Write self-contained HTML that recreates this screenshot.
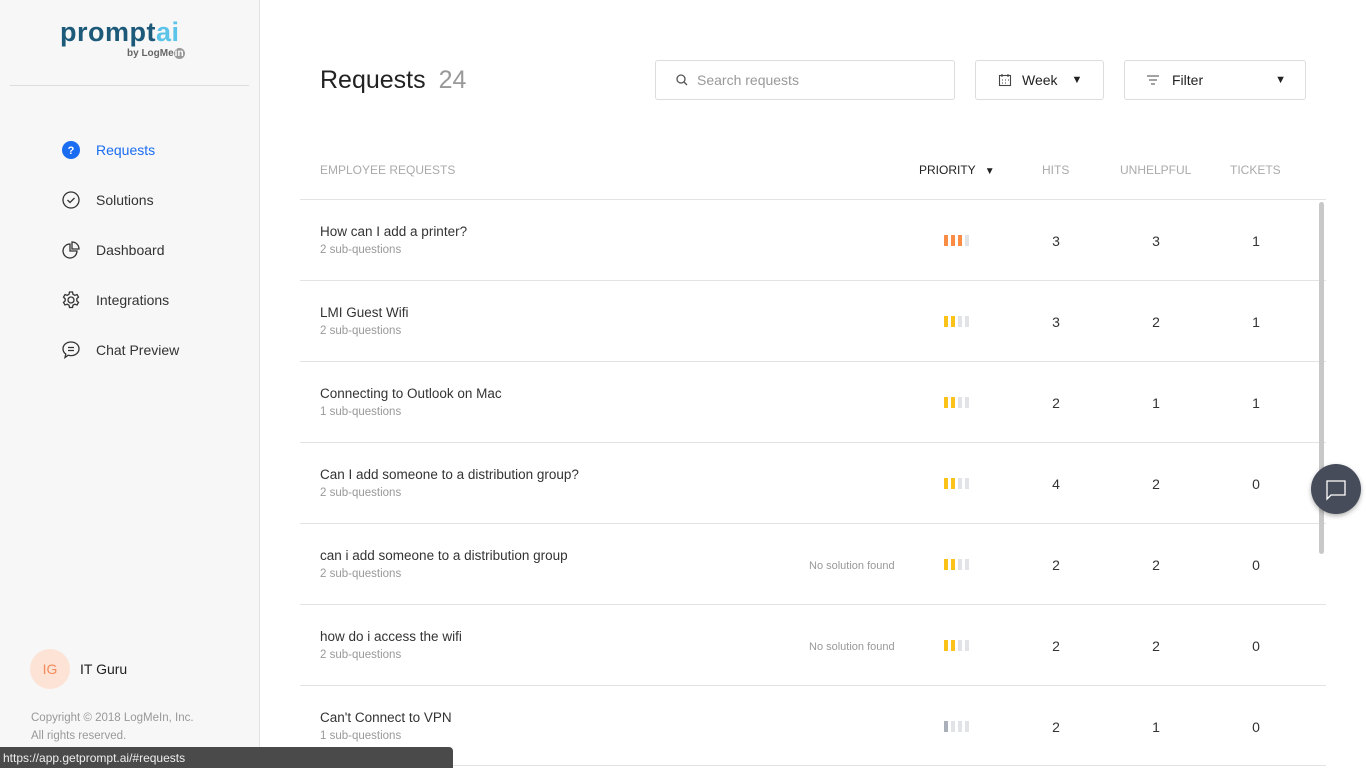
<!DOCTYPE html>
<html><head><meta charset="utf-8"><style>
*{margin:0;padding:0;box-sizing:border-box}
body{width:1366px;height:768px;overflow:hidden;font-family:"Liberation Sans",sans-serif;background:#fff;position:relative;color:#222}
.side{position:absolute;left:0;top:0;width:260px;height:768px;background:#f7f7f7;border-right:1px solid #e3e3e3}
.logo{position:absolute;left:60px;top:17px;font-size:27px;font-weight:bold;color:#1d5a7a;letter-spacing:0.5px}
.logo span{color:#5cc4e8}
.by{position:absolute;left:127px;top:48px;font-size:10px;color:#666;font-weight:bold}
.hr{position:absolute;left:10px;top:85px;width:239px;height:1px;background:#ddd}
.nav{position:absolute;left:60px;font-size:14px;color:#333;display:flex;align-items:center}
.nav svg{width:22px;height:22px;margin-right:14px}
.ab{position:absolute;left:30px;top:649px;width:40px;height:40px;border-radius:50%;background:#fde3d6;color:#f28a5a;font-size:14px;text-align:center;line-height:40px}
.box{position:absolute;border:1px solid #ddd;border-radius:3px;height:40px;top:60px;font-size:14px;display:flex;align-items:center}
.th{position:absolute;top:163px;font-size:12px;color:#aaa}
.row{position:absolute;left:300px;width:1026px;height:81px;border-top:1px solid #e3e3e3}
.t{position:absolute;left:20px;top:24px;font-size:13.5px;color:#333}
.s{position:absolute;left:20px;top:44px;font-size:11.5px;color:#999}
.n{position:absolute;top:33px;font-size:14px;color:#333;width:40px;text-align:center}
.ns{position:absolute;left:509px;top:36px;font-size:11px;color:#999}
.bars{position:absolute;left:644px;top:35px;display:flex;gap:3px}
.bars i{width:4px;height:11px;background:#e1e3e7;display:block}
</style></head><body>
<div class="side">
<div class="logo">prompt<span>ai</span></div>
<div class="by">by LogMe<span style="background:#999;color:#fff;border-radius:50%;padding:0 1px">in</span></div>
<div class="hr"></div>
<div class="nav" style="top:139px;color:#1a6cf0"><svg viewBox="0 0 22 22"><circle cx="11" cy="11" r="9" fill="#1a6cf0"/><text x="11" y="15" font-size="11" fill="#fff" text-anchor="middle" font-family="Liberation Sans" font-weight="bold">?</text></svg>Requests</div>
<div class="nav" style="top:189px"><svg viewBox="0 0 22 22" fill="none" stroke="#333" stroke-width="1.3"><circle cx="11" cy="11" r="8"/><path d="M7.5 11l2.5 2.5 4.5-4.5"/></svg>Solutions</div>
<div class="nav" style="top:239px"><svg viewBox="0 0 22 22" fill="none" stroke="#333" stroke-width="1.3"><path d="M10 5a7 7 0 1 0 7 7h-7z"/><path d="M12 3v7h7a7 7 0 0 0-7-7z"/></svg>Dashboard</div>
<div class="nav" style="top:289px"><svg viewBox="0 0 22 22" fill="none" stroke="#333" stroke-width="1.3"><circle cx="11" cy="11" r="3"/><path d="M9.5 3h3l.5 2.3 1.8 1 2.2-.8 1.5 2.6-1.7 1.6v2.1l1.7 1.6-1.5 2.6-2.2-.8-1.8 1-.5 2.3h-3l-.5-2.3-1.8-1-2.2.8-1.5-2.6 1.7-1.6V9.9L3.5 8.1 5 5.5l2.2.8 1.8-1z"/></svg>Integrations</div>
<div class="nav" style="top:339px"><svg viewBox="0 0 22 22" fill="none" stroke="#333" stroke-width="1.3"><path d="M11 3c4.7 0 8 3 8 6.8s-3.3 6.8-8 6.8c-1 0-2-.1-2.8-.4L5 18.5l.8-3.4C4 13.9 3 12 3 9.8 3 6 6.3 3 11 3z"/><path d="M8 8.5h6M8 11.5h6"/></svg>Chat Preview</div>
<div class="ab">IG</div>
<div style="position:absolute;left:80px;top:661px;font-size:14px">IT Guru</div>
<div style="position:absolute;left:31px;top:709px;font-size:11.5px;color:#999;line-height:18px">Copyright © 2018 LogMeIn, Inc.<br>All rights reserved.</div>
</div>
<div style="position:absolute;left:320px;top:66px;font-size:25px;color:#222">Requests <span style="color:#999;margin-left:6px">24</span></div>
<div class="box" style="left:655px;width:300px;color:#999;font-size:14px"><svg width="14" height="14" viewBox="0 0 14 14" style="margin:0 8px 0 19px" fill="none" stroke="#555" stroke-width="1.3"><circle cx="6" cy="6" r="4"/><path d="M9 9l3 3"/></svg>Search requests</div>
<div class="box" style="left:975px;width:129px"><svg width="14" height="14" viewBox="0 0 14 14" style="margin:0 10px 0 22px" fill="none" stroke="#444" stroke-width="1.1"><rect x="1.5" y="2.5" width="11" height="10"/><path d="M4 1v3M10 1v3M4 7h1M7 7h1M10 7h1M4 10h1M7 10h1"/></svg>Week<span style="margin-left:14px;font-size:11px">▼</span></div>
<div class="box" style="left:1124px;width:182px"><svg width="14" height="14" viewBox="0 0 14 14" style="margin:0 12px 0 21px" fill="none" stroke="#444" stroke-width="1.1"><path d="M1 3h12M3 7h8M5 11h4"/></svg>Filter<span style="margin-left:auto;margin-right:19px;font-size:11px">▼</span></div>
<div class="th" style="left:320px">EMPLOYEE REQUESTS</div>
<div class="th" style="left:919px;color:#222">PRIORITY <span style="font-size:10px;margin-left:6px">▼</span></div>
<div class="th" style="left:1042px">HITS</div>
<div class="th" style="left:1120px">UNHELPFUL</div>
<div class="th" style="left:1230px">TICKETS</div>

<div class="row" style="top:199px"><div class="t">How can I add a printer?</div><div class="s">2 sub-questions</div><div class="bars"><i style="background:#fb8c44"></i><i style="background:#fb8c44"></i><i style="background:#fb8c44"></i><i></i></div><div class="n" style="left:736px">3</div><div class="n" style="left:836px">3</div><div class="n" style="left:936px">1</div></div>
<div class="row" style="top:280px"><div class="t">LMI Guest Wifi</div><div class="s">2 sub-questions</div><div class="bars"><i style="background:#fbc21a"></i><i style="background:#fbc21a"></i><i></i><i></i></div><div class="n" style="left:736px">3</div><div class="n" style="left:836px">2</div><div class="n" style="left:936px">1</div></div>
<div class="row" style="top:361px"><div class="t">Connecting to Outlook on Mac</div><div class="s">1 sub-questions</div><div class="bars"><i style="background:#fbc21a"></i><i style="background:#fbc21a"></i><i></i><i></i></div><div class="n" style="left:736px">2</div><div class="n" style="left:836px">1</div><div class="n" style="left:936px">1</div></div>
<div class="row" style="top:442px"><div class="t">Can I add someone to a distribution group?</div><div class="s">2 sub-questions</div><div class="bars"><i style="background:#fbc21a"></i><i style="background:#fbc21a"></i><i></i><i></i></div><div class="n" style="left:736px">4</div><div class="n" style="left:836px">2</div><div class="n" style="left:936px">0</div></div>
<div class="row" style="top:523px"><div class="t">can i add someone to a distribution group</div><div class="s">2 sub-questions</div><div class="ns">No solution found</div><div class="bars"><i style="background:#fbc21a"></i><i style="background:#fbc21a"></i><i></i><i></i></div><div class="n" style="left:736px">2</div><div class="n" style="left:836px">2</div><div class="n" style="left:936px">0</div></div>
<div class="row" style="top:604px"><div class="t">how do i access the wifi</div><div class="s">2 sub-questions</div><div class="ns">No solution found</div><div class="bars"><i style="background:#fbc21a"></i><i style="background:#fbc21a"></i><i></i><i></i></div><div class="n" style="left:736px">2</div><div class="n" style="left:836px">2</div><div class="n" style="left:936px">0</div></div>
<div class="row" style="top:685px;border-bottom:1px solid #e3e3e3"><div class="t">Can't Connect to VPN</div><div class="s">1 sub-questions</div><div class="bars"><i style="background:#a9b0b9"></i><i></i><i></i><i></i></div><div class="n" style="left:736px">2</div><div class="n" style="left:836px">1</div><div class="n" style="left:936px">0</div></div>

<div style="position:absolute;left:1319px;top:202px;width:5px;height:352px;background:#c8c8c8;border-radius:3px"></div>
<div style="position:absolute;left:1311px;top:464px;width:50px;height:50px;border-radius:50%;background:#464c59;box-shadow:0 2px 5px rgba(0,0,0,.3)"><svg width="50" height="50" viewBox="0 0 50 50" fill="none" stroke="#fff" stroke-width="1.3"><path d="M16 17h18v14H20l-4 4z"/></svg></div>
<div style="position:absolute;left:0;top:747px;width:453px;height:21px;background:#4a4a4a;border-top-right-radius:4px;color:#eee;font-size:12px;line-height:22px;padding-left:3px;font-family:'Liberation Sans',sans-serif">https://app.getprompt.ai/#requests</div>
</body></html>
